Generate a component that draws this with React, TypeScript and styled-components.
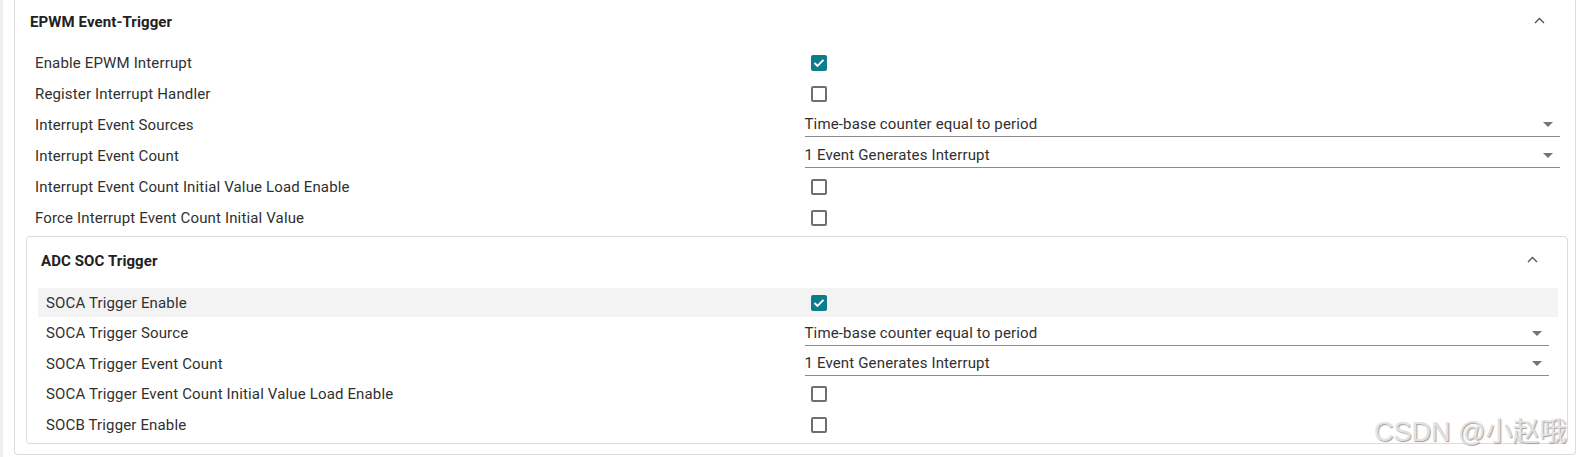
import styled, { createGlobalStyle } from 'styled-components'

type Field =
  | { label: string; kind: 'check'; checked: boolean; highlight?: boolean }
  | { label: string; kind: 'select'; value: string }

const epwmFields: Field[] = [
  { label: 'Enable EPWM Interrupt', kind: 'check', checked: true },
  { label: 'Register Interrupt Handler', kind: 'check', checked: false },
  { label: 'Interrupt Event Sources', kind: 'select', value: 'Time-base counter equal to period' },
  { label: 'Interrupt Event Count', kind: 'select', value: '1 Event Generates Interrupt' },
  { label: 'Interrupt Event Count Initial Value Load Enable', kind: 'check', checked: false },
  { label: 'Force Interrupt Event Count Initial Value', kind: 'check', checked: false },
]

const socFields: Field[] = [
  { label: 'SOCA Trigger Enable', kind: 'check', checked: true, highlight: true },
  { label: 'SOCA Trigger Source', kind: 'select', value: 'Time-base counter equal to period' },
  { label: 'SOCA Trigger Event Count', kind: 'select', value: '1 Event Generates Interrupt' },
  { label: 'SOCA Trigger Event Count Initial Value Load Enable', kind: 'check', checked: false },
  { label: 'SOCB Trigger Enable', kind: 'check', checked: false },
]

const GlobalStyle = createGlobalStyle`
  html, body {
    margin: 0;
    padding: 0;
    background: #fff;
  }
  body {
    font-family: Roboto, "Liberation Sans", sans-serif;
    font-size: 15px;
    letter-spacing: 0.15px;
    color: #303030;
  }
`

const Chevron = () => (
  <svg width="11" height="7" viewBox="0 0 11 7">
    <polyline points="1,6 5.5,1.5 10,6" fill="none" stroke="#555" strokeWidth="1.4" />
  </svg>
)

const Caret = () => (
  <svg width="10" height="5" viewBox="0 0 10 5">
    <polygon points="0,0 10,0 5,5" fill="#757575" />
  </svg>
)

const Check = () => (
  <svg width="12" height="10" viewBox="0 0 12 10">
    <polyline points="1.5,5 4.5,8 10.5,1.8" fill="none" stroke="#fff" strokeWidth="1.9" />
  </svg>
)

const FieldRows = ({ fields, inner }: { fields: Field[]; inner?: boolean }) => (
  <FieldList inner={inner}>
    {fields.map((f) => (
      <Row key={f.label} highlight={f.kind === 'check' && f.highlight}>
        <Label>{f.label}</Label>
        {f.kind === 'check' ? (
          <Box checked={f.checked}>{f.checked && <Check />}</Box>
        ) : (
          <Select>
            <span>{f.value}</span>
            <Caret />
          </Select>
        )}
      </Row>
    ))}
  </FieldList>
)

export default function App() {
  return (
    <>
      <GlobalStyle />
      <Page>
        <Strip />
        <Main>
          <OuterCard>
            <Header>
              <span>EPWM Event-Trigger</span>
              <Chevron />
            </Header>
            <FieldRows fields={epwmFields} />
            <InnerCard>
              <Header inner>
                <span>ADC SOC Trigger</span>
                <Chevron />
              </Header>
              <FieldRows fields={socFields} inner />
            </InnerCard>
          </OuterCard>
        </Main>
        <Watermark>CSDN @小赵哦</Watermark>
      </Page>
    </>
  )
}

const Page = styled.div`
  position: relative;
  display: flex;
  height: 457px;
  overflow: hidden;
`

const Strip = styled.div`
  width: 3px;
  background: #efefef;
  flex-shrink: 0;
`

const Main = styled.div`
  flex: 1;
  padding: 0 5px 0 11px;
`

const OuterCard = styled.div`
  border: 1px solid #dcdcdc;
  border-top: none;
  border-radius: 0 0 4px 4px;
  padding-bottom: 10px;
`

const InnerCard = styled.div`
  margin: 4px 7px 0 11px;
  border: 1px solid #dcdcdc;
  border-radius: 4px;
  padding-bottom: 4px;
`

const Header = styled.div<{ inner?: boolean }>`
  display: flex;
  align-items: center;
  justify-content: space-between;
  height: ${({ inner }) => (inner ? '47px' : '44px')};
  padding: ${({ inner }) => (inner ? '0 29px 0 14px' : '0 30px 0 15px')};
  font-weight: 700;
  font-size: 15px;
  letter-spacing: 0.1px;
  color: #222;

  svg {
    margin-top: -3px;
  }
`

const FieldList = styled.div<{ inner?: boolean }>`
  display: flex;
  flex-direction: column;
  gap: ${({ inner }) => (inner ? '1.6px' : '2px')};
  margin: ${({ inner }) => (inner ? '4px 9px 0 11px' : '4px 6px 0 12px')};
`

const Row = styled.div<{ highlight?: boolean }>`
  display: grid;
  grid-template-columns: 1fr 1fr;
  align-items: center;
  height: 29px;
  padding: 0 9px 0 8px;
  background: ${({ highlight }) => (highlight ? '#f3f3f3' : 'transparent')};
`

const Label = styled.div`
  white-space: nowrap;
`

const Box = styled.div<{ checked: boolean }>`
  box-sizing: border-box;
  width: 16px;
  height: 16px;
  margin-left: 13px;
  border-radius: 2px;
  display: flex;
  align-items: center;
  justify-content: center;
  background: ${({ checked }) => (checked ? '#0e7c8b' : '#fff')};
  border: ${({ checked }) => (checked ? 'none' : '2px solid #6f6f6f')};
`

const Select = styled.div`
  box-sizing: border-box;
  align-self: start;
  height: 27px;
  margin-left: 7px;
  padding: 0 7px 3px 0;
  display: flex;
  align-items: flex-end;
  justify-content: space-between;
  border-bottom: 1px solid #8c8c8c;
  line-height: 18px;

  svg {
    margin-bottom: 6px;
  }
`

const Watermark = styled.div`
  position: absolute;
  left: 1374px;
  top: 410px;
  font-family: "Liberation Sans", "Noto Sans CJK SC", sans-serif;
  font-size: 27px;
  letter-spacing: 0;
  white-space: nowrap;
  color: #e2e2e2;
  text-shadow: 1px 1px 1px #a0a0a0;
  pointer-events: none;
`
